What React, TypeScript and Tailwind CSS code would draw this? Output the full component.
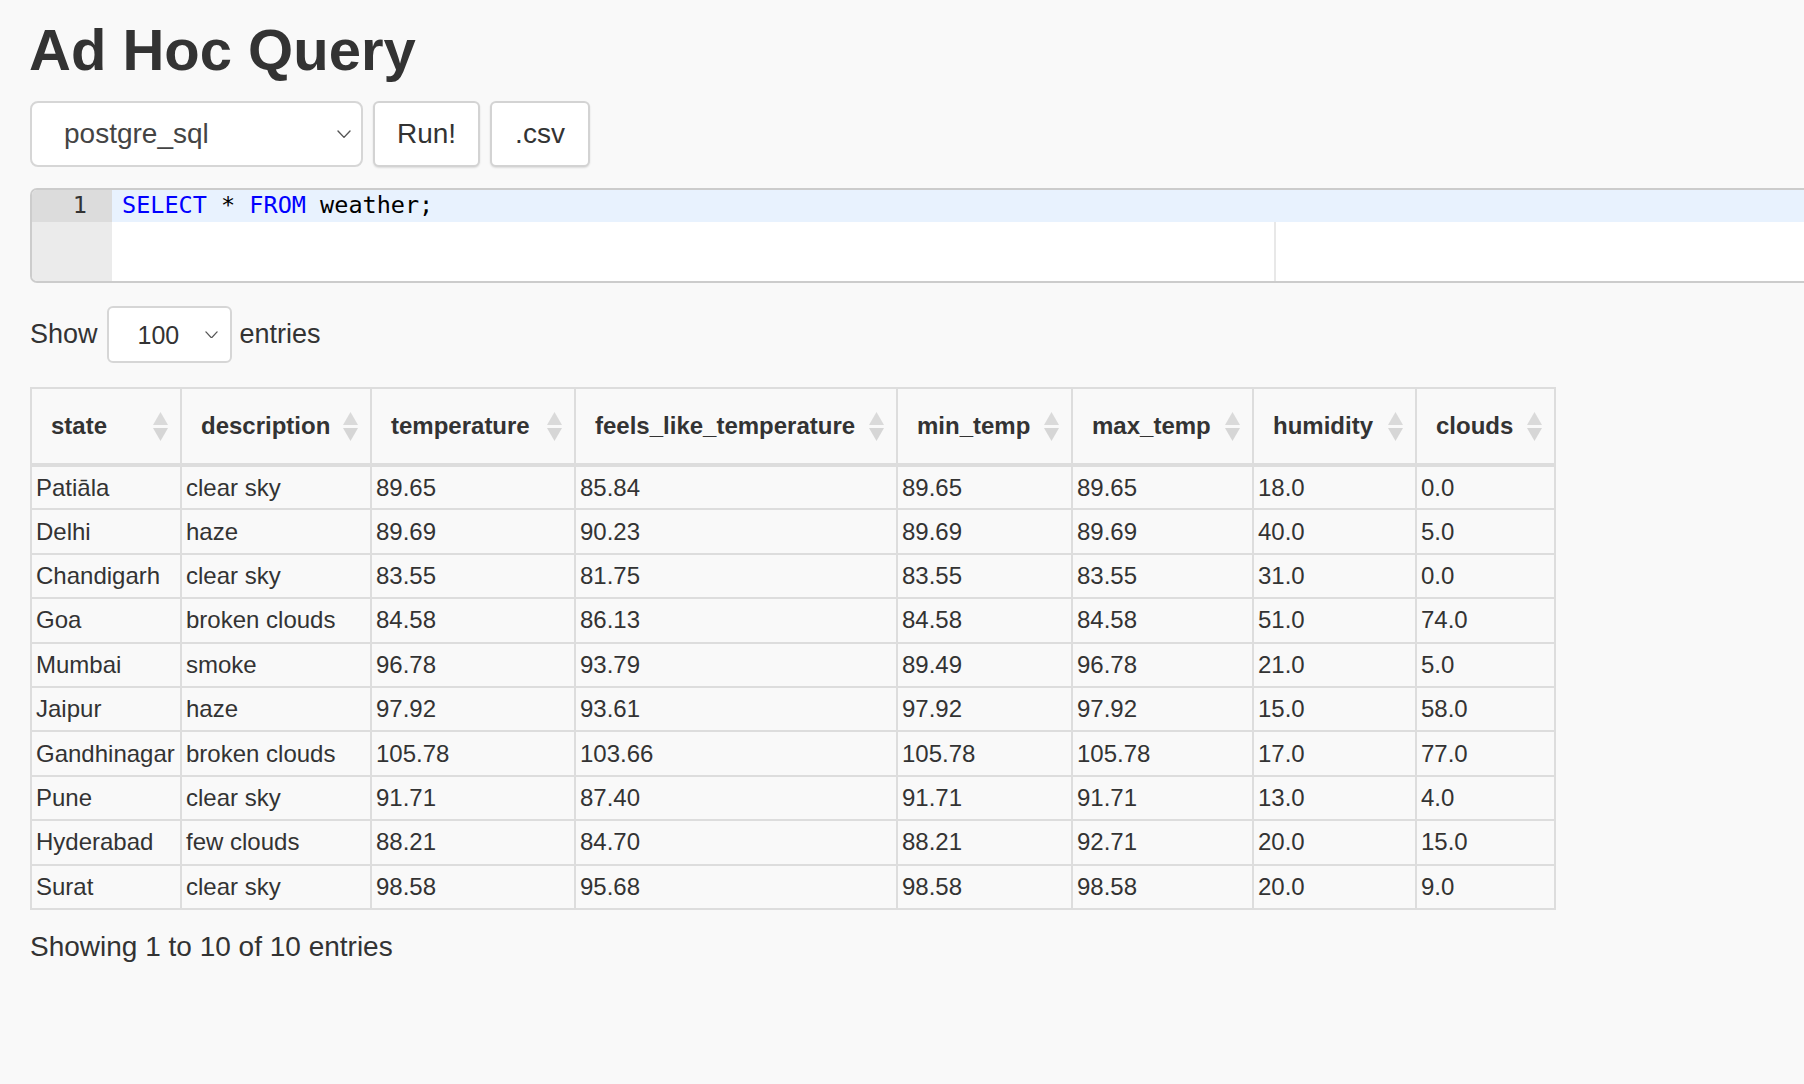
import React from "react";

const rows: string[][] = [
  ["Patiāla", "clear sky", "89.65", "85.84", "89.65", "89.65", "18.0", "0.0"],
  ["Delhi", "haze", "89.69", "90.23", "89.69", "89.69", "40.0", "5.0"],
  ["Chandigarh", "clear sky", "83.55", "81.75", "83.55", "83.55", "31.0", "0.0"],
  ["Goa", "broken clouds", "84.58", "86.13", "84.58", "84.58", "51.0", "74.0"],
  ["Mumbai", "smoke", "96.78", "93.79", "89.49", "96.78", "21.0", "5.0"],
  ["Jaipur", "haze", "97.92", "93.61", "97.92", "97.92", "15.0", "58.0"],
  ["Gandhinagar", "broken clouds", "105.78", "103.66", "105.78", "105.78", "17.0", "77.0"],
  ["Pune", "clear sky", "91.71", "87.40", "91.71", "91.71", "13.0", "4.0"],
  ["Hyderabad", "few clouds", "88.21", "84.70", "88.21", "92.71", "20.0", "15.0"],
  ["Surat", "clear sky", "98.58", "95.68", "98.58", "98.58", "20.0", "9.0"],
];

const headers = [
  "state",
  "description",
  "temperature",
  "feels_like_temperature",
  "min_temp",
  "max_temp",
  "humidity",
  "clouds",
];

const widths = [150, 190, 204, 322, 175, 181, 163, 139];

function Chevron({ w = 14 }: { w?: number }) {
  return (
    <svg width={w} height={w * 0.6} viewBox="0 0 14 8.4" fill="none">
      <polyline
        points="1,1 7,7.4 13,1"
        stroke="#555"
        strokeWidth="1.4"
        strokeLinecap="round"
        strokeLinejoin="round"
      />
    </svg>
  );
}

function SortIcon() {
  return (
    <svg width="15" height="29" viewBox="0 0 15 29">
      <polygon points="7.5,0 15,13 0,13" fill="#dadada" />
      <polygon points="0,16 15,16 7.5,29" fill="#d6d6d6" />
    </svg>
  );
}

export default function App() {
  return (
    <div
      className="min-h-screen w-full overflow-hidden bg-[#f9f9f9] text-[#333]"
      style={{ fontFamily: '"Liberation Sans", Arial, sans-serif' }}
    >
      <div className="pl-[30px] pt-[21px] pb-[40px]">
        <h1 className="-ml-[1px] text-[58px] font-bold leading-[58px] text-[#333]">
          Ad Hoc Query
        </h1>

        <div className="mt-[22px] flex gap-[10px]">
          <div className="flex h-[66px] w-[333px] items-center justify-between rounded-[8px] border-2 border-[#d6d6d6] bg-white pl-[32px] pr-[10px] text-[28px] text-[#444]">
            <span>postgre_sql</span>
            <Chevron />
          </div>
          <div className="flex h-[66px] w-[107px] items-center justify-center rounded-[6px] border-2 border-[#d3d3d3] bg-white text-[28px] text-[#333] shadow-[0_1px_2px_rgba(0,0,0,0.12)]">
            Run!
          </div>
          <div className="flex h-[66px] w-[100px] items-center justify-center rounded-[6px] border-2 border-[#d3d3d3] bg-white text-[28px] text-[#333] shadow-[0_1px_2px_rgba(0,0,0,0.12)]">
            .csv
          </div>
        </div>

        <div className="mt-[21px] flex h-[95px] w-[1800px] overflow-hidden rounded-l-[7px] border-2 border-r-0 border-[#cccccc] bg-white">
          <div className="flex w-[80px] shrink-0 flex-col bg-[#ebebeb]">
            <div className="flex h-[32px] items-center justify-end bg-[#dcdcdc] pr-[25px] text-[23.5px] text-[#333]" style={{ fontFamily: '"DejaVu Sans Mono", monospace' }}>
              1
            </div>
          </div>
          <div className="relative flex-1">
            <div
              className="flex h-[32px] items-center bg-[#e8f2fe] pl-[10px] text-[23.5px]"
              style={{ fontFamily: '"DejaVu Sans Mono", monospace' }}
            >
              <span className="text-[#0000ff]">SELECT</span>
              <span className="whitespace-pre text-black"> * </span>
              <span className="text-[#0000ff]">FROM</span>
              <span className="whitespace-pre text-black"> weather;</span>
            </div>
            <div className="absolute left-[1162px] top-[32px] bottom-0 w-[2px] bg-[#e8e8e8]" />
          </div>
        </div>

        <div className="mt-[23px] flex items-center text-[27px] text-[#333]">
          <span>Show</span>
          <div className="ml-[9px] mr-[8px] flex h-[57px] w-[125px] items-center justify-between rounded-[6px] border-2 border-[#d6d6d6] bg-white pl-[29px] pr-[12px] text-[25px] text-[#333]">
            <span className="pt-[3px]">100</span>
            <Chevron w={13} />
          </div>
          <span>entries</span>
        </div>

        <table className="mt-[24px] table-fixed border-collapse text-[24px]" style={{ width: 1524 }}>
          <colgroup>
            {widths.map((w, i) => (
              <col key={i} style={{ width: w }} />
            ))}
          </colgroup>
          <thead>
            <tr className="h-[77px]">
              {headers.map((h) => (
                <th
                  key={h}
                  className="border-2 border-b-[4px] border-[#dddddd] pl-[19px] pr-[12px] text-left font-bold text-[#333]"
                >
                  <div className="flex items-center justify-between">
                    <span>{h}</span>
                    <SortIcon />
                  </div>
                </th>
              ))}
            </tr>
          </thead>
          <tbody>
            {rows.map((r, i) => (
              <tr key={i} className="h-[44.4px]">
                {r.map((c, j) => (
                  <td key={j} className="border-2 border-[#dddddd] px-[4px] text-[#333]">
                    {c}
                  </td>
                ))}
              </tr>
            ))}
          </tbody>
        </table>

        <div className="mt-[20px] text-[28px] leading-[34px] text-[#333]">
          Showing 1 to 10 of 10 entries
        </div>
      </div>
    </div>
  );
}
